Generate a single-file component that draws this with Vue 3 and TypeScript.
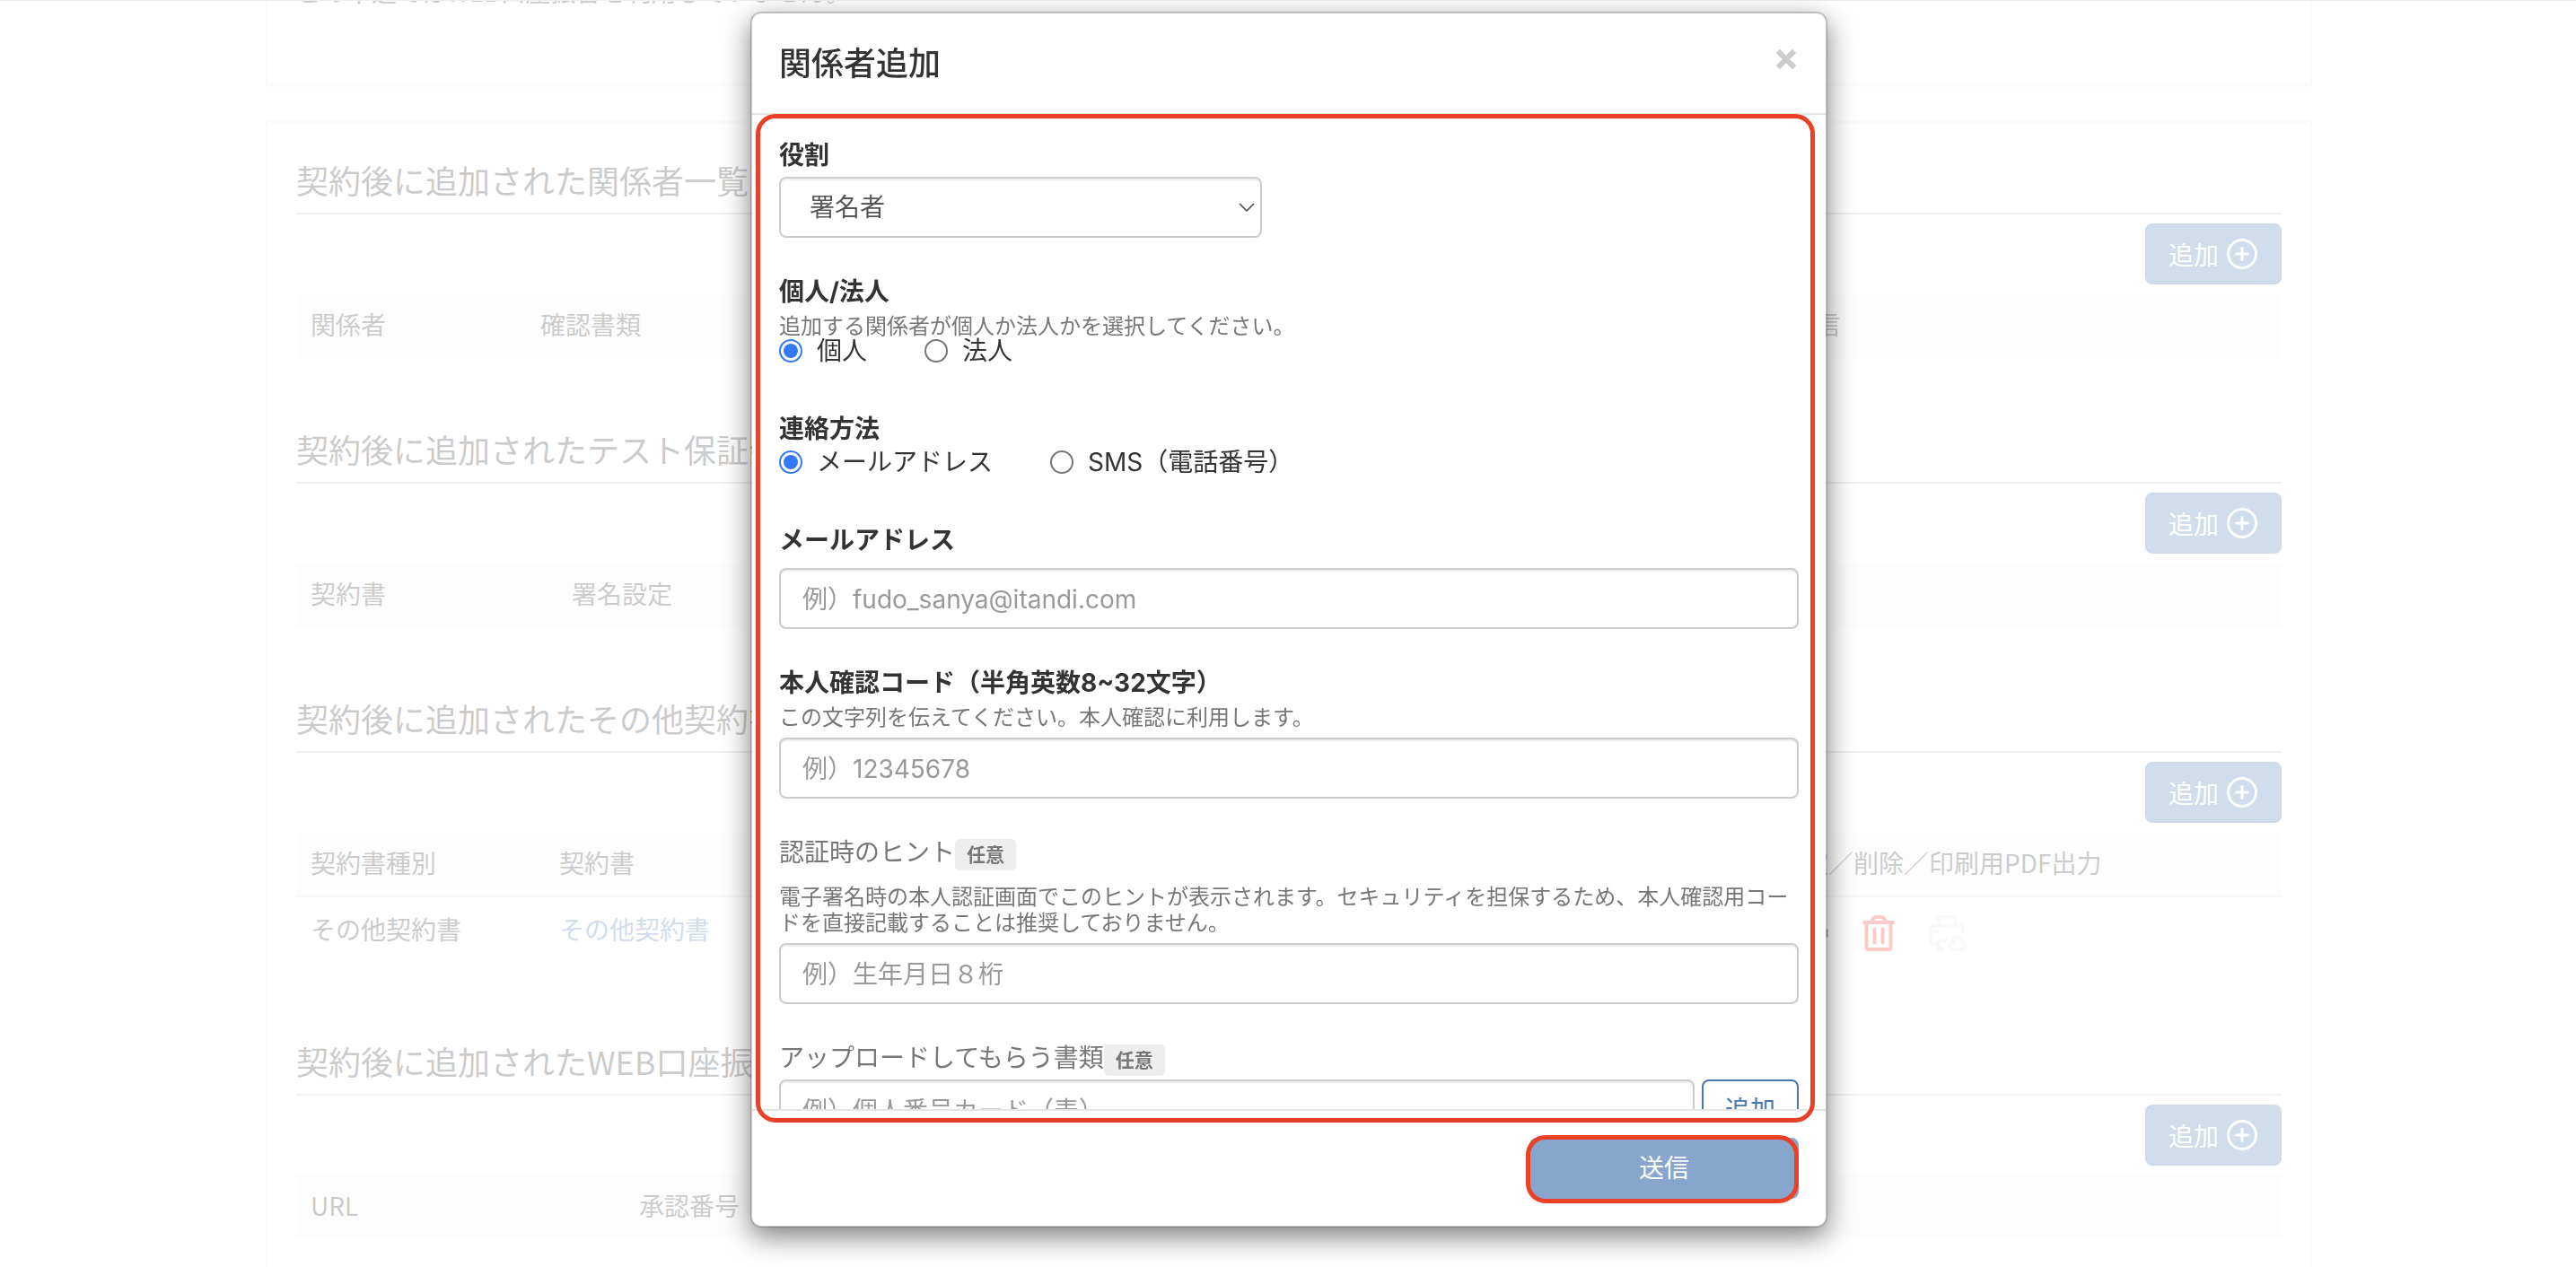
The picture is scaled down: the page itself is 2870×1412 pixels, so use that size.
<script setup lang="ts">
import { ref } from 'vue'

interface Column {
  title: string
  width?: number
}

interface Section {
  id: string
  title: string
  columns: Column[]
  contract?: string
}

const sections: Section[] = [
  {
    id: 'members',
    title: '契約後に追加された関係者一覧',
    columns: [{ title: '関係者', width: 256 }, { title: '確認書類', width: 1392 }, { title: '送信' }],
  },
  {
    id: 'guarantee',
    title: '契約後に追加されたテスト保証会社',
    columns: [{ title: '契約書', width: 291 }, { title: '署名設定' }],
  },
  {
    id: 'others',
    title: '契約後に追加されたその他契約書',
    columns: [
      { title: '契約書種別', width: 277 },
      { title: '契約書', width: 1358 },
      { title: '設定／削除／印刷用PDF出力' },
    ],
    contract: 'その他契約書',
  },
  {
    id: 'account',
    title: '契約後に追加されたWEB口座振替',
    columns: [{ title: 'URL', width: 366 }, { title: '承認番号' }],
  },
]

const role = ref('signer')
const entity = ref('person')
const contact = ref('mail')
const email = ref('')
const code = ref('')
const hint = ref('')
const documentName = ref('')
</script>

<template>
  <div class="page">
    <main class="container">
      <section class="card card-note">
        <p>この申込ではWEB口座振替を利用していません。</p>
      </section>

      <section class="card card-main">
        <section v-for="s in sections" :key="s.id" class="block">
          <h2>{{ s.title }}</h2>
          <div class="toolbar">
            <button type="button" class="add">
              追加
              <svg viewBox="0 0 36 36" width="36" height="36" fill="none" stroke="currentColor" stroke-width="3" stroke-linecap="round">
                <circle cx="18" cy="18" r="15.500" />
                <path d="M18 11.500v13M11.500 18h13" />
              </svg>
            </button>
          </div>
          <table>
            <colgroup>
              <col v-for="c in s.columns" :key="c.title" :style="c.width ? { width: c.width + 'px' } : {}" />
            </colgroup>
            <thead>
              <tr>
                <th v-for="c in s.columns" :key="c.title" scope="col">{{ c.title }}</th>
              </tr>
            </thead>
            <tbody v-if="s.contract">
              <tr>
                <td>{{ s.contract }}</td>
                <td><a href="#contract">{{ s.contract }}</a></td>
                <td>
                  <div class="actions">
                    <button type="button" aria-label="設定">
                      <svg viewBox="0 0 40 40" width="40" height="40" fill="none" stroke="#333" stroke-width="4">
                        <circle cx="20" cy="20" r="12" />
                        <circle cx="20" cy="20" r="4" />
                        <path stroke-width="9" d="M20 1v7M20 32v7M1 20h7M32 20h8" />
                      </svg>
                    </button>
                    <button type="button" aria-label="削除">
                      <svg viewBox="0 0 40 40" width="40" height="40" fill="none" stroke="#ef3323" stroke-width="4" stroke-linecap="round" stroke-linejoin="round">
                        <path d="M4 8h32" />
                        <path d="M6.500 9v27q0 2 2 2h23q2 0 2-2V9" />
                        <path d="M12 8q2-6 5-6h6q3 0 5 6" />
                        <path d="M15.500 15.500v15M24.500 15.500v15" />
                      </svg>
                    </button>
                    <button type="button" aria-label="印刷用PDF出力">
                      <svg viewBox="0 0 42 40" width="42" height="40" fill="none" stroke="#e8e8e8" stroke-width="4" stroke-linejoin="round">
                        <path d="M10 11V2h20v9" />
                        <path d="M10 32H2V15q0-3 3-3h30q3 0 3 3v6" />
                        <path d="M6 18h6" />
                        <path d="M20 28h-9v10h6" />
                        <path d="M25 38q-3-1-2-5 1-3 4-3 0-6 5-6t5 6q3 0 3 4 0 4-3 4z" />
                      </svg>
                    </button>
                  </div>
                </td>
              </tr>
            </tbody>
          </table>
        </section>
      </section>
    </main>
  </div>

  <div class="backdrop">
    <form class="modal" role="dialog" aria-labelledby="modal-title" @submit.prevent>
      <header class="modal-header">
        <h1 id="modal-title">関係者追加</h1>
        <button type="button" class="close" aria-label="閉じる">
          <svg viewBox="0 0 24 24" width="24" height="24" stroke="#ccc" stroke-width="6" stroke-linecap="square">
            <path d="M5 5l14 14M19 5L5 19" />
          </svg>
        </button>
      </header>

      <div class="modal-body">
        <div class="group">
          <label class="title" for="role">役割</label>
          <div class="select">
            <select id="role" v-model="role">
              <option value="signer">署名者</option>
            </select>
            <svg viewBox="0 0 20 12" width="20" height="12" fill="none" stroke="#444" stroke-width="1.500">
              <path d="M2 2l8 8 8-8" />
            </svg>
          </div>
        </div>

        <fieldset class="group group-radio">
          <legend class="title">個人/法人</legend>
          <p class="help">追加する関係者が個人か法人かを選択してください。</p>
          <div class="radios">
            <label><input v-model="entity" type="radio" name="entity" value="person" />個人</label>
            <label><input v-model="entity" type="radio" name="entity" value="company" />法人</label>
          </div>
        </fieldset>

        <fieldset class="group group-radio">
          <legend class="title">連絡方法</legend>
          <div class="radios">
            <label><input v-model="contact" type="radio" name="contact" value="mail" />メールアドレス</label>
            <label><input v-model="contact" type="radio" name="contact" value="sms" />SMS（電話番号）</label>
          </div>
        </fieldset>

        <div class="group group-mail">
          <label class="title" for="email">メールアドレス</label>
          <input id="email" v-model="email" class="field" type="email" placeholder="例）fudo_sanya@itandi.com" />
        </div>

        <div class="group">
          <label class="title" for="code">本人確認コード（半角英数8~32文字）</label>
          <p class="help">この文字列を伝えてください。本人確認に利用します。</p>
          <input id="code" v-model="code" class="field field-after-help" type="text" placeholder="例）12345678" />
        </div>

        <div class="group">
          <label class="title optional" for="hint">認証時のヒント<span class="badge">任意</span></label>
          <p class="help help-spaced">電子署名時の本人認証画面でこのヒントが表示されます。セキュリティを担保するため、本人確認用コードを直接記載することは推奨しておりません。</p>
          <input id="hint" v-model="hint" class="field field-after-help" type="text" placeholder="例）生年月日８桁" />
        </div>

        <div class="group">
          <label class="title optional" for="document">アップロードしてもらう書類<span class="badge">任意</span></label>
          <div class="upload">
            <input id="document" v-model="documentName" class="field" type="text" placeholder="例）個人番号カード（表）" />
            <button type="button">追加</button>
          </div>
        </div>
      </div>

      <footer class="modal-footer">
        <div class="submit-wrap">
          <button type="submit" class="submit">送信</button>
          <span class="mark mark-submit"></span>
        </div>
      </footer>
      <span class="mark mark-body"></span>
    </form>
  </div>
</template>

<style>
body {
  background: #fdfdfd;
  overflow: hidden;
}
</style>

<style scoped>
* {
  box-sizing: border-box;
}

h1,
h2,
p {
  margin: 0;
}

svg {
  display: block;
}

button,
input,
select {
  font: inherit;
}

button {
  cursor: pointer;
}

.page {
  height: 100vh;
  overflow: hidden;
  border-top: 1px solid #bbb;
  padding-left: 2px;
  color: #333;
  font: 28px/40px 'Noto Sans CJK JP', sans-serif;
}

.container {
  max-width: 2280px;
  margin: -31px auto 0;
}

.card {
  border: 2px solid #ebebeb;
  background: #fdfdfd;
  padding: 0 32px;
}

.card-note {
  border-top: 0;
  padding-bottom: 83px;
  box-shadow: 0 2px 2px rgba(0, 0, 0, 0.05);
}

.card-main {
  margin-top: 40px;
  padding-top: 43px;
}

.block {
  margin-bottom: 81px;
}

h2 {
  padding-bottom: 17px;
  border-bottom: 2px solid #c8c8c8;
  font-size: 36px;
  font-weight: 400;
  line-height: 40px;
}

.toolbar {
  display: flex;
  justify-content: flex-end;
  padding: 10px 0;
}

.add {
  display: flex;
  align-items: center;
  gap: 8px;
  height: 68px;
  padding: 0 24px;
  border: 2px solid #3f6da5;
  border-radius: 8px;
  background: #4777b2;
  color: #fff;
}

table {
  width: 100%;
  table-layout: fixed;
  border-collapse: collapse;
}

th {
  height: 72px;
  padding: 0 16px 4px;
  background: #f7f7f7;
  font-weight: 400;
  text-align: left;
}

td {
  height: 82px;
  padding: 15px 16px 0;
  border-top: 2px solid #ddd;
  vertical-align: top;
}

a {
  color: #4777b2;
  text-decoration: none;
}

.actions {
  display: flex;
  gap: 36px;
  padding: 5px 16px 0;
}

.actions button {
  padding: 0;
  border: 0;
  background: none;
}

.backdrop {
  position: fixed;
  inset: 0;
  display: flex;
  justify-content: center;
  padding: 13px 0 44px 2px;
  background: rgba(255, 255, 255, 0.75);
  color: #333;
  font: 28px/40px Inter, 'Noto Sans CJK JP', sans-serif;
}

.modal {
  position: relative;
  display: flex;
  flex-direction: column;
  width: 1200px;
  border: 2px solid rgba(0, 0, 0, 0.2);
  border-radius: 12px;
  background: #fff;
  background-clip: padding-box;
  box-shadow: 0 10px 30px rgba(0, 0, 0, 0.5);
}

.modal-header {
  display: flex;
  align-items: flex-start;
  justify-content: space-between;
  padding: 30px 30px 28px;
  border-bottom: 2px solid #e5e5e5;
}

h1 {
  font-size: 36px;
  font-weight: 500;
  line-height: 53px;
}

.close {
  display: flex;
  align-items: center;
  height: 42px;
  padding: 0 2px 0 0;
  border: 0;
  background: none;
}

.modal-body {
  flex: 1;
  min-height: 0;
  overflow-y: auto;
  scrollbar-width: none;
  padding: 25px 30px 30px;
}

.group {
  display: flex;
  flex-direction: column;
  margin: 0 0 40px;
  padding: 0;
  border: 0;
}

.group-radio {
  margin-bottom: 54px;
}

.title {
  margin-bottom: 4px;
  padding: 0;
  font-weight: 700;
}

.group-mail .title {
  margin-bottom: 11px;
}

.optional {
  display: flex;
  align-items: flex-start;
  color: #777;
  font-weight: 400;
}

.badge {
  margin-top: 5px;
  padding: 0 13px;
  border-radius: 5px;
  background: #eee;
  font-size: 21px;
  font-weight: 700;
  line-height: 35px;
}

.help {
  color: #777;
  font-size: 24px;
  line-height: 29px;
}

.help-spaced {
  margin-top: 11px;
}

.select {
  position: relative;
  width: 538px;
}

.select svg {
  position: absolute;
  top: 28px;
  right: 7px;
  pointer-events: none;
}

.select select,
.field {
  display: block;
  width: 100%;
  height: 68px;
  padding: 2px 24px 0;
  border: 2px solid #ccc;
  border-radius: 8px;
  outline: 0;
  background: #fff;
  box-shadow: inset 0 2px 2px rgba(0, 0, 0, 0.075);
  color: #555;
}

.select select {
  padding: 0 32px;
  appearance: none;
}

.field::placeholder {
  color: #999;
  opacity: 1;
}

.field-after-help {
  margin-top: 8px;
}

.radios {
  display: flex;
  gap: 64px;
  line-height: 26px;
}

.radios label {
  display: flex;
  align-items: center;
  gap: 16px;
  height: 26px;
}

.radios input {
  width: 26px;
  height: 26px;
  margin: 0;
  padding: 3px;
  border: 2px solid #767676;
  border-radius: 50%;
  background: #fff content-box;
  appearance: none;
}

.radios input:checked {
  border-color: #3478f6;
  background-color: #3478f6;
}

.upload {
  display: flex;
  gap: 8px;
}

.upload .field {
  flex: 1;
}

.upload button {
  width: 108px;
  height: 68px;
  padding: 0;
  border: 2px solid #4777b2;
  border-radius: 8px;
  background: #fff;
  color: #4777b2;
}

.modal-footer {
  display: flex;
  justify-content: flex-end;
  padding: 30px;
  border-top: 2px solid #e5e5e5;
}

.submit-wrap {
  position: relative;
}

.submit {
  display: block;
  width: 300px;
  height: 68px;
  border: 0;
  border-radius: 8px;
  background: #88a6cd;
  color: #fff;
}

.mark {
  position: absolute;
  border: 5px solid #ea4025;
  border-radius: 22px;
  pointer-events: none;
}

.mark-submit {
  inset: -3px 0 -5px -4px;
}

.mark-body {
  inset: 112px 12px 115px 4px;
}
</style>
